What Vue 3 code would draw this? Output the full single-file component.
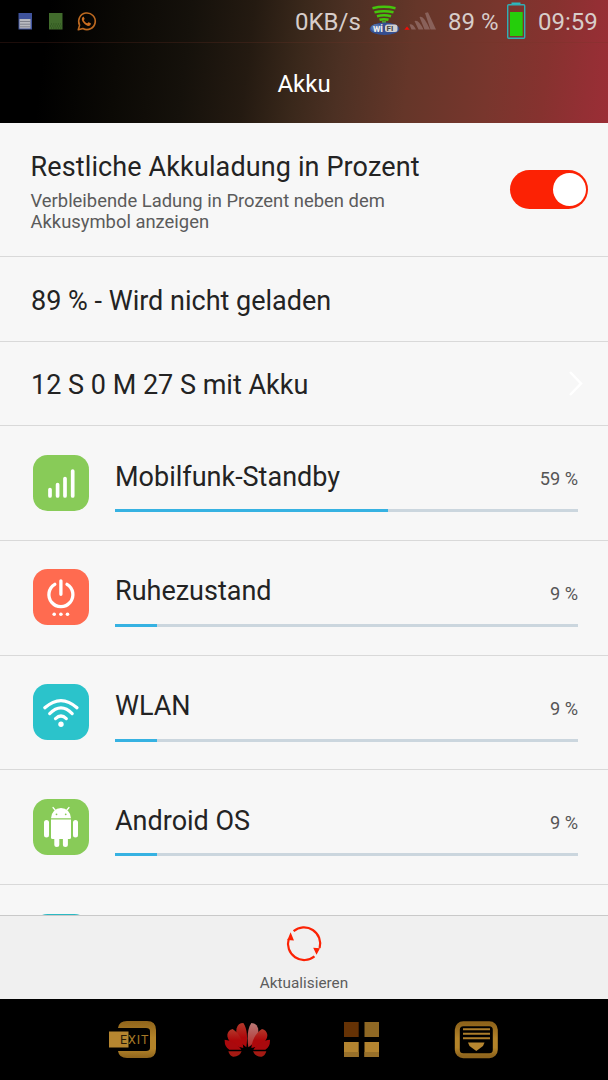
<script setup>
const apps = [
  { name: 'Mobilfunk-Standby', pct: 59, icon: 'signal', h: 115, drop: 1 },
  { name: 'Ruhezustand', pct: 9, icon: 'power', h: 115, drop: 0 },
  { name: 'WLAN', pct: 9, icon: 'wifi', h: 114, drop: 0 },
  { name: 'Android OS', pct: 9, icon: 'android', h: 115, drop: 1 }
]
</script>

<template>
  <div class="screen">
    <header class="top">
      <div class="status">
        <svg class="notif" width="100" height="43" viewBox="0 0 100 43">
          <rect x="18.5" y="13" width="13.5" height="16.5" fill="#3f539c" />
          <rect x="19.5" y="19" width="11" height="9.5" fill="#b9bac0" />
          <path d="M20 21.5h10M20 24.2h10M20 26.8h10" stroke="#71737e" stroke-width=".8" />
          <rect x="49" y="13" width="13.5" height="16.5" fill="#416b2c" />
          <path d="M51 24h10M50 26h12M51 28h11" stroke="#294c1c" stroke-width="1" stroke-dasharray="1 1.3" />
          <path d="M78.300 29.800l1.300-4.700a8.300 8.300 0 1 1 3.300 3.400z" fill="none" stroke="#bd6920" stroke-width="1.600" stroke-linejoin="round" />
          <path d="M83.200 16.800c-2.200 1.200-1.500 3.900.5 6.200 2.200 2.600 5 3.700 6.500 2.200.8-.8.9-1.700.5-1.900l-2-1c-.6-.2-1 1.200-1.600 1-1.600-.6-2.800-1.900-3.300-3-.2-.5 1-1 .8-1.600l-.8-1.800c-.1-.2-.4-.2-.6-.1z" fill="#c96d20" />
        </svg>
        <span class="speed">0KB/s</span>
        <svg class="wifistat" width="32" height="43" viewBox="368 0 32 43">
          <g fill="none" stroke="#45c50c" stroke-width="2.500">
            <path d="M372.500 8.200Q384 5.500 395.500 8.200" />
            <path d="M374.500 12.300Q384 10 393.500 12.300" />
            <path d="M377 16.200Q384 14.300 391 16.200" />
            <path d="M379.500 19.800Q384 18.500 388.500 19.800" />
          </g>
          <path d="M382 21h4v3h-4z" fill="#53972c" />
          <ellipse cx="384.500" cy="28.800" rx="14.800" ry="6.200" fill="#354f91" />
          <ellipse cx="376.500" cy="28" rx="5.500" ry="4" fill="#5270aa" />
          <rect x="385" y="24.500" width="12.500" height="7.500" rx="2.500" fill="#d3d0ce" />
          <text x="373" y="31.500" class="wi">wi</text>
          <text x="386.500" y="31.300" class="fi">FI</text>
        </svg>
        <svg class="cell" width="36" height="43" viewBox="403 0 36 43">
          <path d="M404.300 29.800l2.700-3.200 2.700 3.200z" fill="#f20c06" />
          <path d="M409.500 24.500q3.500-1 6.500 5h-4.500zM414.500 21q4-2 9 8.500h-5zM419.500 17q4-2.500 10.500 12.500h-5.500zM425 12.900l3-.6 8 17.200h-5.500z" fill="#89615a" />
        </svg>
        <span class="pct">89 %</span>
        <svg class="battery" width="20" height="43" viewBox="506 0 20 43">
          <rect x="511.500" y="2.500" width="9" height="2.500" fill="#2bb8bd" />
          <rect x="507.700" y="4.700" width="17" height="33.600" rx="1" fill="none" stroke="#31aeb4" stroke-width="1.400" />
          <rect x="510" y="12" width="12.700" height="24" fill="#25ce0b" />
        </svg>
        <span class="clock">09:59</span>
      </div>
      <h1 class="title">Akku</h1>
    </header>

    <main class="list">
      <section class="row pref">
        <div class="texts">
          <div class="label main-label">Restliche Akkuladung in Prozent</div>
          <p class="summary">Verbleibende Ladung in Prozent neben dem<br />Akkusymbol anzeigen</p>
        </div>
        <div class="toggle"><i class="knob"></i></div>
      </section>
      <section class="row single"><span class="label">89 % - Wird nicht geladen</span></section>
      <section class="row single">
        <span class="label">12 S 0 M 27 S mit Akku</span>
        <svg width="16" height="28" viewBox="0 0 16 28" class="chevron"><path d="M2 2l11 11.500L2 25" fill="none" stroke="#fff" stroke-width="2.500" /></svg>
      </section>
      <section v-for="a in apps" :key="a.name" class="row app" :style="{ height: a.h + 'px' }">
        <svg class="icon" :class="{ raised: !a.drop }" width="56" height="56" viewBox="0 0 56 56" fill="none" stroke-linecap="round">
          <rect width="56" height="56" rx="14.500" :class="a.icon" />
          <path v-if="a.icon === 'signal'" d="M17 34.500v6.500M24.600 29.500v11.500M32 23.500v17.500M39.700 16v25" stroke="#fff" stroke-width="3.700" />
          <g v-else-if="a.icon === 'power'" stroke="#fff" stroke-width="3.300">
            <path d="M27.900 11.800v13.500M21.800 15.300a12 12 0 1 0 12.200 0" />
            <g fill="#fff" stroke="none"><circle cx="21.200" cy="45.200" r="1.800" /><circle cx="27.900" cy="45.200" r="1.800" /><circle cx="34.500" cy="45.200" r="1.800" /></g>
          </g>
          <g v-else-if="a.icon === 'wifi'" stroke="#fff" stroke-width="3.200">
            <path d="M11.800 23.800Q28 9.300 44 23.800M16.700 29.600Q28 18.200 39.200 29.600M22.500 34.600Q28 29.400 33.300 34.600" />
            <circle cx="28" cy="40.200" r="2.700" fill="#fff" stroke="none" />
          </g>
          <g v-else fill="#fff">
            <path d="M18 19.300a10 10.300 0 0 1 20 0z" />
            <path d="M22.500 11.500L20 8.500M33.500 11.500L36 8.500" stroke="#fff" stroke-width="1.200" />
            <circle cx="23.500" cy="15.300" r=".9" fill="#88cb58" /><circle cx="32.700" cy="15.300" r=".9" fill="#88cb58" />
            <path d="M18 20.500h20v18q0 1.500-1.500 1.500h-17q-1.500 0-1.500-1.500z" />
            <path d="M13.500 23.500v12.500M42.500 23.500v12.500M23.800 38v7.500M32.400 38v7.500" stroke="#fff" stroke-width="5" />
          </g>
        </svg>
        <div class="usage">
          <div class="line">
            <span class="label" :class="{ dropped: a.drop }">{{ a.name }}</span>
            <span class="value">{{ a.pct }} %</span>
          </div>
          <div class="track"><div class="fill" :style="{ width: a.pct + '%' }"></div></div>
        </div>
      </section>
      <section class="row next"><i class="next-icon"></i></section>
    </main>

    <footer class="action">
      <svg width="38" height="38" viewBox="0 0 38 38">
        <path d="M8.600 6.200A16.200 16.200 0 0 1 34.600 23M29.500 31.300A16.200 16.200 0 0 1 3.700 14" fill="none" stroke="#fc2204" stroke-width="2.200" />
        <path d="M5.600 7.300L9 15.500l-6.600-.6zM28.200 22.800l6.800.4-3.500 6.500z" fill="#fc2204" />
      </svg>
      <span>Aktualisieren</span>
    </footer>

    <nav class="nav">
      <svg width="608" height="81" viewBox="0 999 608 81">
        <defs>
          <linearGradient id="gold" x1="0" y1="0" x2="0" y2="1">
            <stop offset="0" stop-color="#8f641b" /><stop offset=".45" stop-color="#b38329" /><stop offset=".75" stop-color="#b38329" /><stop offset="1" stop-color="#8f651d" />
          </linearGradient>
          <linearGradient id="petal" x1="0" y1="0" x2="0" y2="1"><stop offset="0" stop-color="#b3392b" /><stop offset=".6" stop-color="#ae080b" /></linearGradient>
          <linearGradient id="petalLight" x1="0" y1="0" x2="0" y2="1"><stop offset="0" stop-color="#b97875" /><stop offset="1" stop-color="#b42b29" /></linearGradient>
        </defs>
        <path d="M118 1028q1-7 9-7h20q9 0 9 9v19q0 9-9 9h-20q-8 0-9-7h28q4 0 4-3v-17q0-3-4-3z" fill="url(#gold)" />
        <path d="M109 1031.500h19.500v16H109z" fill="#b68630" />
        <text x="120" y="1044" class="exit"><tspan fill="#2b1d08">E</tspan><tspan fill="#a57926">XIT</tspan></text>
        <g transform="translate(90 1005) scale(.33333)">
          <path d="M469 127C442 108 436 88 440 70q4-16 20-16c12 17 13 45 9 73z" fill="url(#petal)" />
          <path d="M475 127C502 108 508 88 504 70q-4-16-20-16c-12 17-13 45-9 73z" fill="url(#petalLight)" />
          <path d="M460 129C426 122 411 105 412 89q2-13 16-17c19 12 30 33 32 57z" fill="url(#petal)" />
          <path d="M484 129C518 122 533 105 532 89q-2-13-16-17c-19 12-30 33-32 57z" fill="url(#petal)" />
          <path d="M454 134H418Q403 126 404 104C425 106 444 117 454 134zM490 134H526Q541 126 540 104C519 106 500 117 490 134z" fill="#aa090d" />
          <path d="M415 139h40q-7 17-26 16-10-2-14-16zM529 139h-40q7 17 26 16 10-2 14-16z" fill="#a51a13" />
        </g>
        <path d="M344 1022h14.700v15H344z" fill="#653205" /><path d="M364.500 1022h14.500v15h-14.500z" fill="#8f6824" />
        <path d="M344 1042h14.700v15H344zM364.500 1042h14.500v15h-14.500z" fill="#b38430" />
        <path d="M344 1052h14.700v5H344zM364.500 1052h14.500v5h-14.500z" fill="#98702a" />
        <rect x="457.300" y="1023.800" width="38" height="32" rx="6" fill="none" stroke="url(#gold)" stroke-width="5" />
        <path d="M463 1029.200h27M463 1033.800h27M463 1038.300h27" stroke="#ad7e2a" stroke-width="2" />
        <path d="M468 1042.500h16.500l-1.500 3.500-6.700 5-6.800-5z" fill="#b68630" />
      </svg>
    </nav>
  </div>
</template>

<style>
body { margin: 0; background: #000; }
</style>

<style scoped>
.screen { width: 608px; height: 1080px; overflow: hidden; display: flex; flex-direction: column; background: #f7f7f7; font-family: Roboto, "Liberation Sans", sans-serif; color: #232323; }
.top { height: 123px; flex: none; background: linear-gradient(97deg, #000 0, #000 8%, #0b0905 20%, #15110b 31%, #241a11 41%, #3a281b 49%, #4c3023 56%, #653629 67%, #78362d 80%, #86322f 89%, #942f34 96%, #9b2e36 100%); }
.status { height: 42px; display: flex; align-items: center; border-bottom: 1px solid rgba(115, 50, 40, .25); color: #d7cdca; font-size: 24px; line-height: 43px; white-space: nowrap; }
.status svg { flex: none; display: block; }
.status span { padding-top: 3px; }
.speed { width: 73px; margin-left: 195px; }
.cell { margin-left: 3px; }
.pct { width: 58px; margin-left: 9px; }
.clock { margin-left: 12px; }
.wi { font: bold 10px Roboto, sans-serif; fill: #eee; }
.fi { font: bold 8px Roboto, sans-serif; fill: #444; }
.title { margin: 0; height: 80px; line-height: 83px; text-align: center; font-size: 24px; font-weight: 400; color: #fff; }
.list { height: 792px; flex: none; overflow: hidden; }
.row { box-sizing: border-box; border-bottom: 1px solid #d9d9d9; display: flex; }
.label { font-size: 27px; line-height: 32px; white-space: nowrap; }
.main-label { letter-spacing: .12px; }
.pref { height: 134px; padding: 28px 20px 0 30.500px; justify-content: space-between; }
.summary { margin: 7px 0 0; font-size: 18.400px; line-height: 21px; color: #5b5b5b; white-space: nowrap; }
.toggle { width: 78px; height: 39px; margin-top: 19px; border-radius: 20px; background: #fc2204; display: flex; align-items: center; justify-content: flex-end; padding-right: 2px; box-sizing: border-box; }
.knob { width: 33px; height: 33px; border-radius: 50%; background: #fff; }
.single { height: 84.500px; align-items: center; justify-content: space-between; padding: 4px 24px 0 31px; }
.chevron { margin-top: -2px; }
.app { padding: 29px 30px 0 33px; }
.icon { flex: none; margin-right: 26px; }
.raised { margin-top: -1px; }
.signal, .android { fill: #88cb58; }
.power { fill: #ff6b50; }
.wifi { fill: #2bc3cb; }
.usage { flex: 1; padding-top: 5px; }
.line { height: 49px; display: flex; justify-content: space-between; }
.dropped { padding-top: 1px; }
.value { font-size: 18.200px; line-height: 38px; color: #555; }
.track { height: 3px; background: #cbd6de; }
.fill { height: 3px; background: #36b2e2; }
.next { height: 140px; padding: 29px 0 0 33px; }
.next-icon { width: 56px; height: 56px; border-radius: 14.500px; background: #2bb9c3; }
.action { height: 84px; flex: none; box-sizing: border-box; border-top: 1px solid #c9c9c9; background: #f0f0f0; display: flex; flex-direction: column; align-items: center; padding-top: 9px; font-size: 15.300px; line-height: 20px; color: #5c5c5c; }
.action span { margin-top: 10px; }
.nav { height: 81px; flex: none; background: #000; }
.nav svg { display: block; }
.exit { font: 12.500px Roboto, sans-serif; letter-spacing: .9px; }
</style>
